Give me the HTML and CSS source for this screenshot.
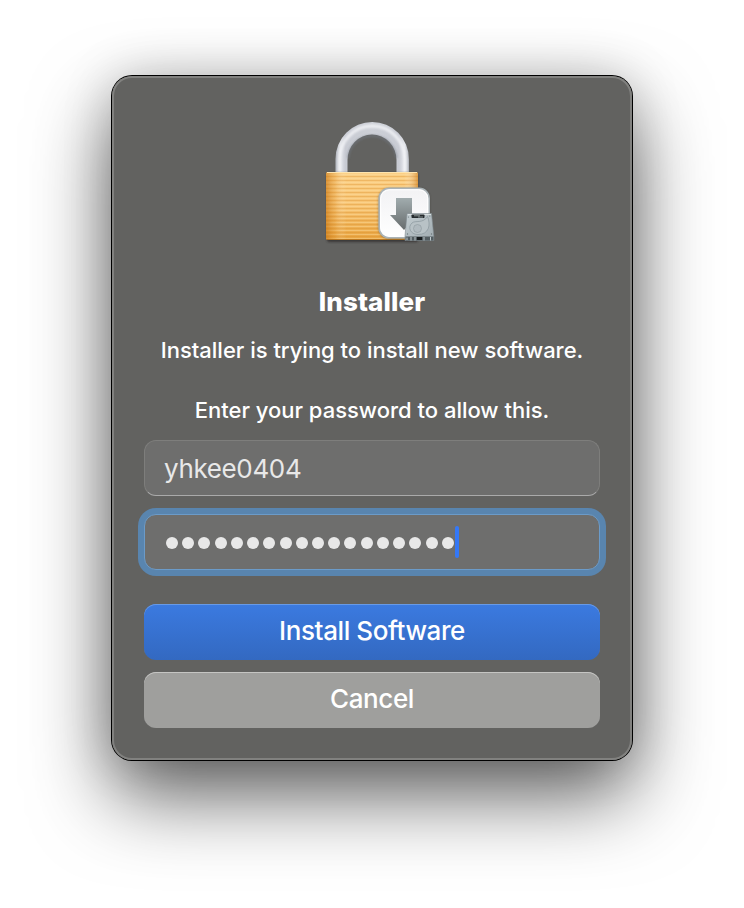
FILE: index.html
```html
<!DOCTYPE html>
<html lang="en">
<head>
<meta charset="utf-8">
<title>Installer</title>
<link rel="stylesheet" href="styles.css">
</head>
<body>
<main class="dialog">
  <svg class="lock" width="128" height="128" viewBox="308 118 128 128" aria-hidden="true">
    <defs>
      <linearGradient id="gold" x1="0" y1="0" x2="0" y2="1"><stop offset="0" stop-color="#fbd087"/><stop offset=".5" stop-color="#f7c474"/><stop offset="1" stop-color="#e8a440"/></linearGradient>
      <linearGradient id="side" x1="0" y1="0" x2="1" y2="0"><stop offset="0" stop-color="#c77411" stop-opacity=".65"/><stop offset=".1" stop-color="#dc902c" stop-opacity=".3"/><stop offset=".22" stop-color="#fff" stop-opacity="0"/><stop offset=".85" stop-color="#fff" stop-opacity="0"/><stop offset="1" stop-color="#c77411" stop-opacity=".6"/></linearGradient>
      <linearGradient id="steel" x1="336" y1="0" x2="409" y2="0" gradientUnits="userSpaceOnUse"><stop offset="0" stop-color="#b3b7bf"/><stop offset=".06" stop-color="#dfe1e7"/><stop offset=".13" stop-color="#c8cbd3"/><stop offset=".5" stop-color="#cdd0d7"/><stop offset=".86" stop-color="#c8cbd3"/><stop offset=".94" stop-color="#e3e5ea"/><stop offset="1" stop-color="#b3b7bf"/></linearGradient>
      <linearGradient id="arrow" x1="0" y1="0" x2="0" y2="1"><stop offset="0" stop-color="#a1acae"/><stop offset="1" stop-color="#676c6d"/></linearGradient>
      <linearGradient id="tile" x1="0" y1="0" x2="0" y2="1"><stop offset="0" stop-color="#f2f2f4"/><stop offset="1" stop-color="#fff"/></linearGradient>
      <linearGradient id="disk" x1="0" y1="0" x2="1" y2="1"><stop offset="0" stop-color="#c3cdd1"/><stop offset="1" stop-color="#a0abb0"/></linearGradient>
      <pattern id="brushed" width="92" height="4" patternUnits="userSpaceOnUse"><path d="M0 .5H92" stroke="#d98a22" stroke-opacity=".32"/><path d="M0 2.500H92" stroke="#ffe2a4" stroke-opacity=".4"/></pattern>
      <filter id="soft" x="-10%" y="-10%" width="120%" height="130%"><feGaussianBlur stdDeviation="1"/></filter>
      <filter id="sheen" x="-10%" y="-10%" width="120%" height="120%"><feGaussianBlur stdDeviation=".8"/></filter>
    </defs>
    <path d="M335.500 173V159a36.700 37 0 0 1 73.400 0V173H396.500V160a24.500 25.500 0 0 0-49 0V173Z" fill="url(#steel)"/>
    <path d="M339.500 172V159a32.700 33 0 0 1 65.400 0V172" fill="none" stroke="#f6f7fa" stroke-width="3.500" opacity=".75" filter="url(#sheen)"/>
    <path d="M348 158a24.300 24.500 0 0 1 48.400 0" fill="none" stroke="#747b86" stroke-width="2" opacity=".6" filter="url(#sheen)"/>
    <rect x="327" y="173" width="91" height="69" rx="2" fill="#292826" opacity=".7" filter="url(#soft)"/>
    <rect x="326" y="172" width="92" height="68" rx="2" fill="url(#gold)"/>
    <rect x="326" y="172" width="92" height="68" rx="2" fill="url(#brushed)"/>
    <rect x="326" y="172" width="92" height="68" rx="2" fill="url(#side)"/>
    <path d="M327 172.500H417" stroke="#ffe5af"/><path d="M327 239.500H417" stroke="#a2600d" opacity=".65"/>
    <rect x="378.500" y="188" width="51.500" height="51" rx="11" fill="#3d3b36" opacity=".5" filter="url(#soft)"/>
    <rect x="379.200" y="188.300" width="50" height="49.500" rx="10" fill="url(#tile)" stroke="#aab3b7" stroke-width="1.600"/>
    <rect x="380.700" y="189.800" width="47" height="46.500" rx="9" fill="none" stroke="#fff"/>
    <path d="M396 198H412V215H418L404 230 390 215H396Z" fill="url(#arrow)"/>
    <path d="M407 213.500H431.500L433.800 236V240.500H405V236Z" fill="url(#disk)" stroke="#7f8a8e" stroke-width=".6"/>
    <path d="M407.800 214.500H431" stroke="#e1e7e9" stroke-width=".8"/>
    <rect x="411.500" y="214.500" width="13" height="3.500" rx=".8" fill="#252b2e"/><path d="M414 215.800H420M418 217H423" stroke="#aeb7b9" stroke-width=".7"/>
    <path d="M427.500 216.500C431 225 429 234.500 418 234.500 410 234.500 407.500 227 412 223 415 220 423 224 427.500 216.500Z" fill="#b8c2c6" stroke="#8a979c" stroke-width=".7"/>
    <circle cx="417.500" cy="228.500" r="4" fill="#b0babf" stroke="#8d999e" stroke-width=".6"/>
    <rect x="405.500" y="236.500" width="28" height="4" fill="#535d61"/><path d="M407 237.500V240M411 237V240.500M415 237V240.500M424 237V240.500M430.500 237V240.500" stroke="#bdc7cb"/><path d="M417 238.500H422" stroke="#171b1d" stroke-width="3"/>
    <circle cx="408.500" cy="217" r=".6" fill="#6b777c"/><circle cx="429.800" cy="216" r=".6" fill="#6b777c"/><circle cx="407.500" cy="234" r=".7" fill="#6b777c"/><circle cx="431.500" cy="234" r=".7" fill="#6b777c"/>
  </svg>
  <h1 class="title">Installer</h1>
  <p class="message first">Installer is trying to install new software.</p>
  <p class="message second">Enter your password to allow this.</p>
  <div class="field username"><span>yhkee0404</span></div>
  <div class="field password"><span class="dots"><i></i><i></i><i></i><i></i><i></i><i></i><i></i><i></i><i></i><i></i><i></i><i></i><i></i><i></i><i></i><i></i><i></i><i></i></span><span class="caret"></span></div>
  <button class="button primary"><span>Install Software</span></button>
  <button class="button secondary"><span>Cancel</span></button>
</main>
</body>
</html>
```
FILE: styles.css
```css
* { box-sizing: border-box; }
body {
  margin: 0;
  height: 908px;
  padding-top: 76px;
  overflow: hidden;
  background: #fff;
  font-family: Inter, "Liberation Sans", sans-serif;
}
.dialog {
  width: 520px;
  height: 684px;
  margin: 0 auto;
  padding: 42px 32px 32px;
  display: flex;
  flex-direction: column;
  border-radius: 20px;
  background: #626260;
  box-shadow: inset 0 0 0 2px #81817f, 0 0 0 1px #000, 0 36px 80px rgba(0, 0, 0, .62), 0 0 50px rgba(0, 0, 0, .17);
}
.lock { display: block; margin-left: 164px; }
.title {
  margin: 40px 0 0;
  height: 32px;
  line-height: 32px;
  text-align: center;
  color: #fff;
  font-size: 26px;
  font-weight: 800;
  letter-spacing: .1px;
}
.message {
  margin: 0;
  height: 30px;
  line-height: 30px;
  text-align: center;
  white-space: nowrap;
  color: #fff;
  font-size: 22px;
  font-weight: 500;
}
.first { margin-top: 17px; letter-spacing: -.01px; }
.second { margin-top: 30px; letter-spacing: -.01px; }
.field {
  display: flex;
  align-items: center;
  height: 56px;
  flex: none;
  padding-left: 20px;
  border-radius: 12px;
  background: #6e6e6d;
  border: 1px solid #7e7e7c;
  border-bottom-color: #aaa;
  color: #e8e8e8;
  font-size: 26px;
  line-height: 32px;
}
.username { margin-top: 15px; padding: 2px 0 0 19px; letter-spacing: -.35px; }
.password {
  margin-top: 18px;
  padding-left: 21px;
  border-color: #6b9bc9;
  box-shadow: 0 0 0 6px #5985af;
}
.dots { display: flex; gap: 4.220px; padding-top: 1px; }
.dots i { width: 12px; height: 12px; border-radius: 50%; background: #e8e8e8; }
.caret { width: 4px; height: 32px; margin-left: 1.300px; border-radius: 2px; background: #3478f6; }
.button {
  display: block;
  width: 100%;
  height: 56px;
  flex: none;
  padding: 0 0 2px;
  border: 0;
  border-radius: 12px;
  color: #fff;
  font: 500 26px/32px Inter, "Liberation Sans", sans-serif;
  letter-spacing: -.4px;
}
.primary {
  margin-top: 34px;
  background: linear-gradient(#3b7ae0, #3369c1);
  box-shadow: inset 0 1px #689ae6;
}
.secondary {
  margin-top: 12px;
  background: #9f9f9d;
  box-shadow: inset 0 1px #c5c5c3;
}
```
